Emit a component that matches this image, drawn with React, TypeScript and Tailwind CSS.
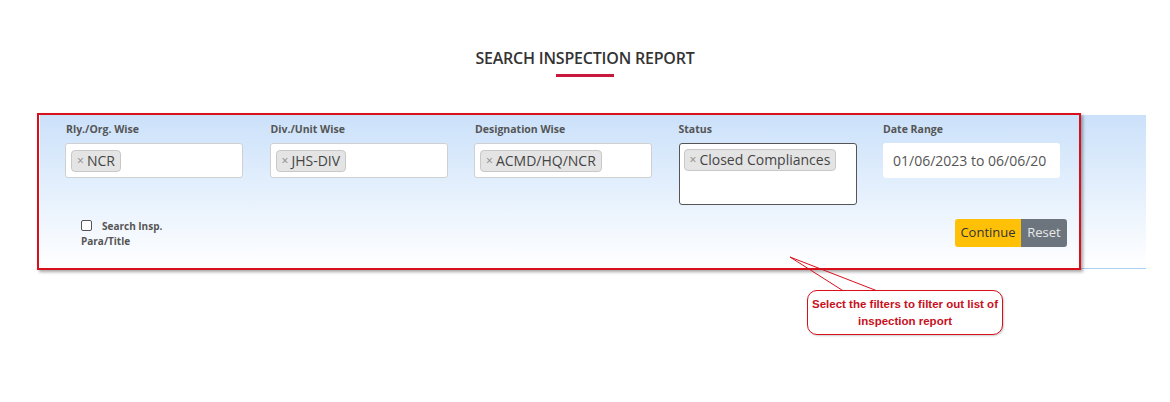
import React from "react";

const fields = [
  { label: "Rly./Org. Wise", tag: "NCR" },
  { label: "Div./Unit Wise", tag: "JHS-DIV" },
  { label: "Designation Wise", tag: "ACMD/HQ/NCR" },
];

function Chip({ text }: { text: string }) {
  return (
    <span className="inline-flex items-center gap-[3px] h-[22px] px-[5px] rounded-[4px] border border-[#c8c8c8] bg-[#e4e4e4] text-[14px] leading-none text-[#444]">
      <span className="text-[12px] text-[#888]">×</span>
      {text}
    </span>
  );
}

export default function App() {
  return (
    <div className="w-[1170px] h-[402px] bg-white font-['Open_Sans',sans-serif] text-[#333] overflow-hidden">
      {/* === Title === */}
      <div className="flex flex-col items-center pt-[47px]">
        <h2 className="text-[16px] font-semibold leading-[22px] text-[#333] tracking-[-0.2px]">
          SEARCH INSPECTION REPORT
        </h2>
        <div className="mt-[5px] w-[58px] h-[3px] bg-[#c8193c]" />
      </div>

      {/* === Filter panel === */}
      <div className="relative ml-[40px] mt-[38px] w-[1106px]">
        <div className="h-[154px] bg-gradient-to-b from-[#cbe1fa] to-white border-b border-[#a8d0f2] pl-[25px] pt-[6px]">
          <div className="flex gap-[26.5px]">
            {fields.map((f) => (
              <div key={f.label} className="w-[178px]">
                <div className="text-[10.5px] font-bold text-[#555] leading-[16px] pl-[1px]">{f.label}</div>
                <div className="mt-[6px] h-[35px] bg-white border border-[#d0d0d0] rounded-[3px] flex items-center px-[5px]">
                  <Chip text={f.tag} />
                </div>
              </div>
            ))}
            <div className="w-[178px]">
              <div className="text-[10.5px] font-bold text-[#555] leading-[16px]">Status</div>
              <div className="mt-[6px] h-[62px] bg-white border border-[#555] rounded-[3px] flex items-start pt-[5px] px-[4px]">
                <Chip text="Closed Compliances" />
              </div>
            </div>
            <div className="w-[177px]">
              <div className="text-[10.5px] font-bold text-[#555] leading-[16px]">Date Range</div>
              <div className="mt-[6px] h-[35px] bg-white rounded-[3px] flex items-center px-[10px] text-[14px] text-[#555] whitespace-nowrap overflow-hidden">
                01/06/2023 to 06/06/20
              </div>
            </div>
          </div>

          <div className="flex items-start justify-between mt-[12px] w-[1002px]">
            <div className="pl-[16px] text-[10px] font-bold text-[#555] leading-[15px]">
              <div className="flex items-center gap-[10px]">
                <span className="w-[11px] h-[11px] border border-[#555] rounded-[2px] bg-white" />
                <span className="mt-[2px]">Search Insp.</span>
              </div>
              <div>Para/Title</div>
            </div>
            <div className="flex mt-[2px]">
              <button className="w-[66px] h-[28px] bg-[#ffc107] text-[13px] text-[#333] rounded-l-[3px]">Continue</button>
              <button className="w-[46px] h-[28px] bg-[#6c757d] text-[13px] text-[#e8e8e8] rounded-r-[3px]">Reset</button>
            </div>
          </div>
        </div>

        {/* annotation frame */}
        <div className="absolute left-[-3px] top-[-2px] w-[1044px] h-[157px] border-2 border-[#d8101c] shadow-[2px_2px_3px_rgba(0,0,0,0.35)] pointer-events-none" />

        {/* callout */}
        <svg className="absolute left-[745px] top-[138px]" width="120" height="50" viewBox="0 0 120 50">
          <path d="M5 4 L60 39 M5 4 L95 39" stroke="#d8101c" strokeWidth="1" fill="none" />
        </svg>
        <div className="absolute left-[767px] top-[175px] w-[196px] h-[45px] border border-[#d8101c] rounded-[10px] bg-white flex items-center justify-center text-center text-[11.5px] font-bold text-[#c8101c] leading-[17px] font-['Liberation_Sans',sans-serif] shadow-[1px_1px_2px_rgba(0,0,0,0.2)]">
          Select the filters to filter out list of
          <br />
          inspection report
        </div>
      </div>
    </div>
  );
}
